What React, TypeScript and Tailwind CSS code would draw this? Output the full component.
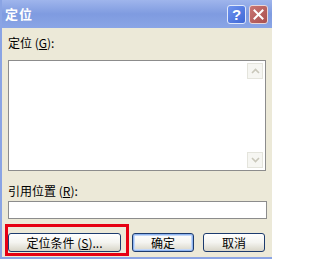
import React from "react";

const font = { fontFamily: '"Noto Sans CJK SC", "Liberation Sans", sans-serif' };

function XPButton({ children, isDefault, className }: { children: React.ReactNode; isDefault?: boolean; className?: string }) {
  return (
    <div
      className={
        "h-[19px] rounded-[3px] border border-[#1c3b6e] bg-gradient-to-b from-[#ffffff] via-[#f4f4f0] to-[#d8d5c8] flex items-center justify-center text-[12px] text-black leading-none " +
        (isDefault ? "shadow-[inset_0_0_0_1px_#8eb4f0,inset_0_0_0_2px_#c4d8f8] " : "") +
        (className || "")
      }
    >
      {children}
    </div>
  );
}

export default function App() {
  return (
    <div className="relative w-[272px] h-[259px] bg-[#ECE9D8] overflow-hidden border-l-2 border-[#8aa4e4] border-b-2" style={font}>
      <div className="h-[28px] -ml-[2px] bg-gradient-to-b from-[#9fb5ec] via-[#7f9be0] to-[#8aa5e6] flex items-center justify-between pl-[5px] pr-[4px]">
        <span className="text-white font-bold text-[13px] tracking-[1px]">定位</span>
        <div className="flex gap-[3px]">
          <div className="w-[19px] h-[19px] rounded-[3px] border border-[#dfe8fb] bg-gradient-to-br from-[#6f93ee] to-[#3f67d6] flex items-center justify-center text-white text-[15px] font-bold leading-none" style={{ fontFamily: '"Liberation Sans", sans-serif' }}>
            ?
          </div>
          <div className="w-[19px] h-[19px] rounded-[3px] border border-[#ead6d6] bg-gradient-to-br from-[#c97573] to-[#a9504f] flex items-center justify-center">
            <svg width="11" height="11" viewBox="0 0 11 11">
              <path d="M1.5 1.5 L9.5 9.5 M9.5 1.5 L1.5 9.5" stroke="white" strokeWidth="2" strokeLinecap="square" />
            </svg>
          </div>
        </div>
      </div>

      <div className="flex flex-col pl-[6px] pr-[6px]">
        <div className="mt-[8px] h-[14px] text-[12px] leading-[14px] text-black">
          定位 (<span className="underline">G</span>):
        </div>
        <div className="mt-[10px] h-[111px] border border-[#8c8c8c] bg-white flex justify-end p-[2px]">
          <div className="w-[16px] flex flex-col justify-between">
            <div className="h-[16px] border border-[#e4e4dc] bg-[#f6f6f2] flex items-center justify-center">
              <svg width="9" height="6" viewBox="0 0 9 6">
                <path d="M1 5 L4.5 1.5 L8 5" stroke="#c9c7ba" strokeWidth="1.6" fill="none" />
              </svg>
            </div>
            <div className="h-[16px] border border-[#e4e4dc] bg-[#f6f6f2] flex items-center justify-center">
              <svg width="9" height="6" viewBox="0 0 9 6">
                <path d="M1 1 L4.5 4.5 L8 1" stroke="#c9c7ba" strokeWidth="1.6" fill="none" />
              </svg>
            </div>
          </div>
        </div>
        <div className="mt-[13px] h-[14px] text-[12px] leading-[14px] text-black">
          引用位置 (<span className="underline">R</span>):
        </div>
        <div className="mt-[3px] h-[18px] border border-[#8c8c8c] bg-white mr-[-1px]" />
        <div className="mt-[14px] flex items-center">
          <XPButton className="w-[113px]">定位条件 (<span className="underline">S</span>)...</XPButton>
          <XPButton isDefault className="w-[62px] ml-[11px]">确定</XPButton>
          <XPButton className="w-[62px] ml-[9px]">取消</XPButton>
        </div>
      </div>

      <div className="absolute left-[3px] top-[224px] w-[124px] h-[32px] border-[3px] border-[#e60012]" />
    </div>
  );
}
